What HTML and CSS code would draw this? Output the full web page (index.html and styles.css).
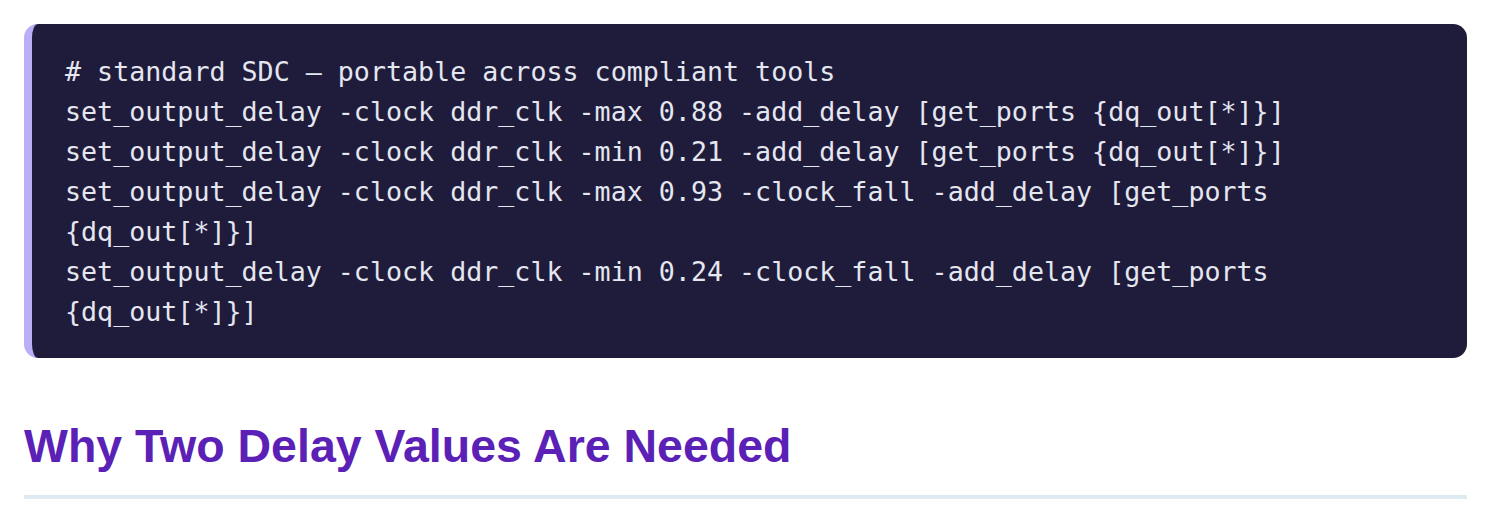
FILE: index.html
```html
<!DOCTYPE html>
<html>
<head>
<meta charset="utf-8">
<link rel="stylesheet" href="styles.css">
</head>
<body>
<pre class="code"><code># standard SDC — portable across compliant tools
set_output_delay -clock ddr_clk -max 0.88 -add_delay [get_ports {dq_out[*]}]
set_output_delay -clock ddr_clk -min 0.21 -add_delay [get_ports {dq_out[*]}]
set_output_delay -clock ddr_clk -max 0.93 -clock_fall -add_delay [get_ports {dq_out[*]}]
set_output_delay -clock ddr_clk -min 0.24 -clock_fall -add_delay [get_ports {dq_out[*]}]</code></pre>
<h2 class="section-title">Why Two Delay Values Are Needed</h2>
</body>
</html>
```
FILE: styles.css
```css
html, body {
  margin: 0;
  padding: 0;
  background: #ffffff;
}
body {
  padding: 24px 27px 0 24px;
  font-family: "Liberation Sans", Arial, sans-serif;
}
.code {
  margin: 0;
  background: #1f1c3b;
  color: #e4e6f0;
  border-left: 8px solid #bcaef6;
  border-radius: 14px;
  padding: 28px 32px 26px 33px;
  font-family: "DejaVu Sans Mono", monospace;
  font-size: 26.67px;
  line-height: 40px;
  white-space: pre-wrap;
}
.code code {
  font-family: inherit;
}
.section-title {
  margin: 62px 0 0 0;
  padding-bottom: 23px;
  border-bottom: 4px solid #ddebf1;
  color: #5b21b6;
  font-size: 46.5px;
  font-weight: 700;
  line-height: 52px;
}
```
